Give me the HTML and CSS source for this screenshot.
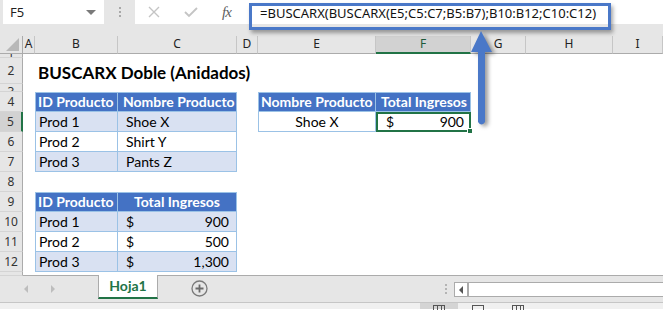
FILE: index.html
```html
<!DOCTYPE html>
<html lang="es">
<head>
  <meta charset="UTF-8">
  <title>BUSCARX Doble (Anidados)</title>
  <link rel="stylesheet" href="styles.css">
</head>
<body>
  <div class="excel">
    <div class="formula-bar">
      <div class="name-box">
        <span>F5</span>
        <span class="caret"></span>
      </div>
      <div class="grip"><i></i><i></i><i></i></div>
      <div class="fx-buttons">
        <svg class="fx-icon" width="12" height="12" viewBox="0 0 12 12"><path d="M1 1 L11 11 M11 1 L1 11" stroke="#c4c4c4" stroke-width="1.4" fill="none"/></svg>
        <svg class="fx-icon" width="14" height="12" viewBox="0 0 14 12"><path d="M1 6 L5 10 L13 2" stroke="#c4c4c4" stroke-width="1.8" fill="none"/></svg>
        <span class="fx-label">fx</span>
      </div>
      <div class="formula-input">=BUSCARX(BUSCARX(E5;C5:C7;B5:B7);B10:B12;C10:C12)</div>
    </div>

    <div class="sheet">
      <div class="row head-row">
        <div class="corner"><span class="corner-tri"></span></div>
        <div class="ch">A</div>
        <div class="ch">B</div>
        <div class="ch">C</div>
        <div class="ch">D</div>
        <div class="ch">E</div>
        <div class="ch ch-active">F</div>
        <div class="ch">G</div>
        <div class="ch">H</div>
        <div class="ch">I</div>
      </div>

      <div class="row r-tiny1">
        <div class="rh">1</div>
      </div>
      <div class="row r-title">
        <div class="rh">2</div>
        <div></div>
        <div class="title">BUSCARX Doble (Anidados)</div>
      </div>
      <div class="row r-tiny3">
        <div class="rh">3</div>
      </div>

      <div class="row">
        <div class="rh">4</div>
        <div></div>
        <div class="c th first top">ID Producto</div>
        <div class="c th top">Nombre Producto</div>
        <div></div>
        <div class="c th first top">Nombre Producto</div>
        <div class="c th top">Total Ingresos</div>
      </div>
      <div class="row">
        <div class="rh rh-active">5</div>
        <div></div>
        <div class="c band first">Prod 1</div>
        <div class="c band indent">Shoe X</div>
        <div></div>
        <div class="c first center">Shoe X</div>
        <div class="c money selected"><span>$</span><span>900</span><b class="handle"></b></div>
      </div>
      <div class="row">
        <div class="rh">6</div>
        <div></div>
        <div class="c first">Prod 2</div>
        <div class="c indent">Shirt Y</div>
      </div>
      <div class="row">
        <div class="rh">7</div>
        <div></div>
        <div class="c band first">Prod 3</div>
        <div class="c band indent">Pants Z</div>
      </div>
      <div class="row">
        <div class="rh">8</div>
      </div>
      <div class="row">
        <div class="rh">9</div>
        <div></div>
        <div class="c th first top">ID Producto</div>
        <div class="c th top center">Total Ingresos</div>
      </div>
      <div class="row">
        <div class="rh">10</div>
        <div></div>
        <div class="c band first">Prod 1</div>
        <div class="c band money"><span>$</span><span>900</span></div>
      </div>
      <div class="row">
        <div class="rh">11</div>
        <div></div>
        <div class="c first">Prod 2</div>
        <div class="c money"><span>$</span><span>500</span></div>
      </div>
      <div class="row">
        <div class="rh">12</div>
        <div></div>
        <div class="c band first">Prod 3</div>
        <div class="c band money"><span>$</span><span>1,300</span></div>
      </div>
      <div class="row r-cut">
        <div class="rh">13</div>
      </div>
    </div>

    <div class="tab-bar">
      <div class="tab-nav">
        <span class="nav-arrow left"></span>
        <span class="nav-arrow right"></span>
      </div>
      <div class="tab">Hoja1</div>
      <div class="add-sheet">
        <svg width="17" height="17" viewBox="0 0 17 17"><circle cx="8.5" cy="8.5" r="7.5" fill="none" stroke="#7a7a7a" stroke-width="1.3"/><path d="M8.5 4.5 V12.5 M4.5 8.5 H12.5" stroke="#6a6a6a" stroke-width="1.8"/></svg>
      </div>
      <div class="tab-space"></div>
      <div class="grip grip-tabs"><i></i><i></i><i></i></div>
      <div class="hscroll">
        <span class="hscroll-btn"><span class="tri-left"></span></span>
      </div>
    </div>

    <div class="status-bar">
      <div class="views">
        <span class="view active"><i class="view-ic grid-ic"></i></span>
        <span class="view"><i class="view-ic page-ic"></i></span>
        <span class="view"><i class="view-ic grid-ic"></i></span>
      </div>
    </div>

    <div class="callout"></div>
    <svg class="arrow" width="40" height="110" viewBox="0 0 40 110">
      <path d="M21 6 L32 27 L25 27 L25 97 Q21.5 102 18 97 L18 27 L11 27 Z" fill="#4a78c8"/>
    </svg>
  </div>
</body>
</html>
```

FILE: styles.css
```css
* {
  box-sizing: border-box;
}
body {
  margin: 0;
  background: #ffffff;
}
.excel {
  position: relative;
  width: 663px;
  height: 310px;
  overflow: hidden;
  background: #ffffff;
  font-family: "Lato", "Open Sans", sans-serif;
}

/* formula bar */
.formula-bar {
  display: flex;
  height: 36px;
  padding-bottom: 12px;
  background: #e6e6e6;
}
.name-box {
  display: flex;
  align-items: center;
  justify-content: space-between;
  width: 101px;
  margin-left: 3px;
  padding: 0 8px 0 7px;
  background: #ffffff;
  font-family: "Noto Sans", sans-serif;
  font-size: 13px;
  color: #222;
}
.caret {
  width: 0;
  height: 0;
  border-left: 5px solid transparent;
  border-right: 5px solid transparent;
  border-top: 5px solid #7a7a7a;
}
.grip {
  display: flex;
  flex-direction: column;
  justify-content: center;
  gap: 2px;
  width: 31px;
  align-items: center;
}
.grip i {
  display: block;
  width: 2px;
  height: 2px;
  background: #a8a8a8;
}
.fx-buttons {
  display: flex;
  align-items: center;
  gap: 24px;
  width: 114px;
  padding-left: 13px;
  background: #ffffff;
}
.fx-label {
  font-family: "Liberation Serif", serif;
  font-style: italic;
  font-size: 15px;
  color: #606060;
  letter-spacing: -1px;
}
.formula-input {
  flex: 1;
  padding: 4px 0 0 11px;
  background: #ffffff;
  font-family: "Noto Sans", sans-serif;
  font-size: 13px;
  color: #111;
  white-space: nowrap;
}

/* grid */
.row {
  display: grid;
  grid-template-columns: 23px 12px 83px 119px 21px 118px 95px 55px 87px 50px;
  height: 20px;
}
.r-tiny1 { height: 5px; }
.r-title { height: 26px; }
.r-tiny3 { height: 8px; }
.r-cut { height: 4px; }

.head-row {
  height: 17px;
}
.corner {
  position: relative;
  background: #e6e6e6;
  border-right: 1px solid #ababab;
  border-bottom: 1px solid #ababab;
}
.corner-tri {
  position: absolute;
  right: 3px;
  bottom: 2px;
  width: 0;
  height: 0;
  border-left: 13px solid transparent;
  border-bottom: 13px solid #b8b8b8;
}
.ch {
  background: #e6e6e6;
  border-right: 1px solid #c6c6c6;
  border-bottom: 1px solid #ababab;
  text-align: center;
  font-family: "Noto Sans", sans-serif;
  font-size: 12px;
  line-height: 16px;
  color: #222;
}
.ch-active {
  background: #d2d2d2;
  border-bottom: 2px solid #217346;
  color: #1e5a3a;
}
.rh {
  overflow: hidden;
  background: #e6e6e6;
  border-right: 1px solid #ababab;
  border-bottom: 1px solid #d4d4d4;
  text-align: center;
  font-family: "Noto Sans", sans-serif;
  font-size: 12px;
  line-height: 19px;
  color: #333;
}
.r-tiny1 .rh { line-height: 0; padding-top: 0; }
.r-tiny3 .rh { line-height: 16px; }
.r-title .rh { line-height: 26px; }
.rh-active {
  background: #d2d2d2;
  border-right: 2px solid #217346;
}

.title {
  grid-column: span 4;
  padding: 4px 0 0 3px;
  font-size: 17px;
  font-weight: bold;
  white-space: nowrap;
  color: #000;
}

/* table cells */
.c {
  position: relative;
  padding: 0 3px;
  border-right: 1px solid #9bc2e6;
  border-bottom: 1px solid #9bc2e6;
  font-size: 14px;
  line-height: 19px;
  color: #000;
  white-space: nowrap;
}
.c.first { border-left: 1px solid #9bc2e6; }
.c.top { border-top: 1px solid #9bc2e6; line-height: 18px; }
.th {
  background: #4472c4;
  color: #ffffff;
  font-weight: bold;
  padding-left: 5px;
}
.th.first { padding-left: 2px; }
.band { background: #d9e1f2; }
.indent { padding-left: 8px; }
.center { text-align: center; }
.th.center { padding-left: 3px; }
.money {
  display: flex;
  justify-content: space-between;
  padding: 0 7px 0 8px;
}
.selected {
  border: 2px solid #217346;
  line-height: 16px;
  padding: 0 5px 0 8px;
}
.handle {
  position: absolute;
  right: -4px;
  bottom: -4px;
  width: 6px;
  height: 6px;
  background: #217346;
  border: 1px solid #ffffff;
}

/* sheet tabs */
.tab-bar {
  display: flex;
  height: 28px;
  background: #e6e6e6;
  border-top: 1px solid #ababab;
  border-bottom: 1px solid #c6c6c6;
  margin-top: -1px;
}
.tab-nav {
  display: flex;
  align-items: center;
  gap: 23px;
  width: 98px;
  padding-left: 24px;
}
.nav-arrow {
  width: 0;
  height: 0;
  border-top: 4px solid transparent;
  border-bottom: 4px solid transparent;
}
.nav-arrow.left { border-right: 4px solid #bdbdbd; }
.nav-arrow.right { border-left: 4px solid #bdbdbd; }
.tab {
  width: 60px;
  height: 24px;
  margin-top: -1px;
  background: #ffffff;
  border-left: 1px solid #ababab;
  border-right: 1px solid #ababab;
  border-bottom: 2px solid #217346;
  text-align: center;
  font-size: 14px;
  font-weight: bold;
  line-height: 22px;
  color: #217346;
}
.add-sheet {
  display: flex;
  align-items: center;
  padding: 0 0 1px 33px;
}
.tab-space {
  flex: 1;
}
.grip-tabs {
  width: 16px;
}
.grip-tabs i {
  background: #b4b4b4;
  height: 2px;
}
.hscroll {
  width: 209px;
  height: 15px;
  margin-top: 6px;
  background: #ffffff;
  border: 1px solid #ababab;
  border-right: none;
}
.hscroll-btn {
  display: flex;
  align-items: center;
  justify-content: center;
  width: 14px;
  height: 13px;
  border-right: 2px solid #ababab;
}
.tri-left {
  width: 0;
  height: 0;
  border-top: 4px solid transparent;
  border-bottom: 4px solid transparent;
  border-right: 4px solid #555;
}

/* status bar */
.status-bar {
  height: 6px;
  background: #f0f0f0;
  padding-left: 420px;
}
.views {
  display: flex;
}
.view {
  display: flex;
  justify-content: center;
  width: 40px;
  height: 6px;
}
.view.active {
  width: 38px;
  background: #d4d4d4;
}
.view-ic {
  display: block;
  width: 12px;
  height: 6px;
  margin-top: 2px;
  border: 1px solid #555;
  border-bottom: none;
}
.grid-ic {
  background: linear-gradient(90deg, transparent 3px, #555 3px, #555 4px, transparent 4px, transparent 7px, #555 7px, #555 8px, transparent 8px);
}

/* overlays */
.callout {
  position: absolute;
  left: 249px;
  top: 3px;
  width: 362px;
  height: 27px;
  border: 3px solid #4a78c8;
  box-shadow: 2px 3px 4px rgba(0, 0, 0, 0.35);
}
.arrow {
  position: absolute;
  left: 460px;
  top: 25px;
  filter: drop-shadow(3px 2px 2px rgba(0, 0, 0, 0.4));
}
```
